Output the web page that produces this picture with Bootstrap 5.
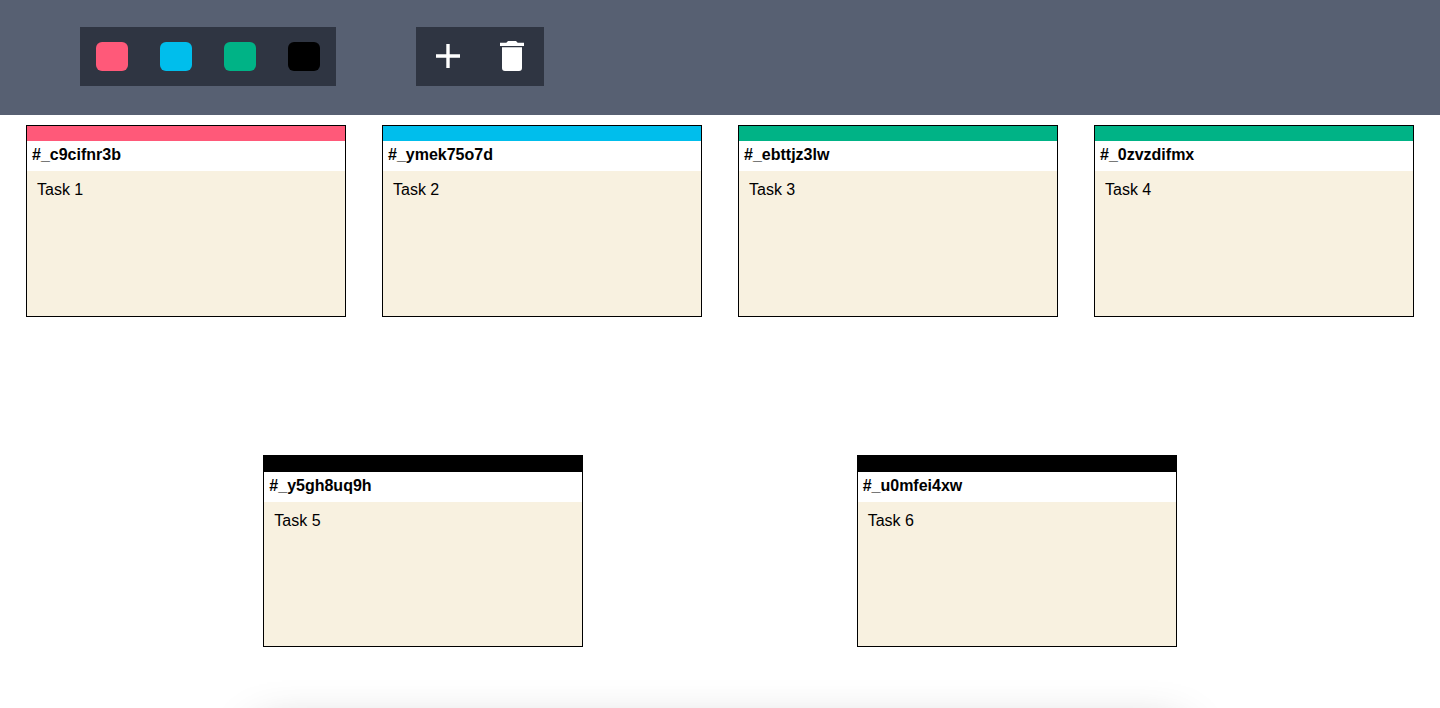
<!DOCTYPE html>
<html lang="en">
<head>
<meta charset="utf-8">
<meta name="viewport" content="width=device-width, initial-scale=1">
<title>Task board</title>
<link href="https://cdn.jsdelivr.net/npm/bootstrap@5.3.0/dist/css/bootstrap.min.css" rel="stylesheet">
<style>
  body { font-family: "Liberation Sans", Arial, sans-serif; font-size: 16px; line-height: 20px; color: #000; }
  .toolbar { background: #576072; padding: 27px 80px 29px; gap: 80px; }
  .tool-group { background: #2f3542; }
  .tool { width: 64px; height: 59px; border: 0; background: none; }
  .swatch { width: 32px; height: 29px; border-radius: 6px; }
  .pink { background: #ff5979; }
  .blue { background: #00beec; }
  .green { background: #00b386; }
  .black { background: #000; }
  .ticket { width: 320px; height: 192px; margin: 10px 10px 128px; border: 1px solid #000; }
  .ticket-color { height: 15px; }
  .ticket-color.black { height: 16px; }
  .ticket-id { height: 30px; padding: 4px 5px; font-size: 16px; line-height: 20px; }
  .ticket-text { background: #f8f1e0; padding: 9px 10px; }
  .sheet { top: 100%; left: 50%; width: 64%; height: 300px; margin-top: 24px; background: #fff; transform: translateX(-50%); box-shadow: 0 0 46px rgba(0, 0, 0, .3); }
</style>
</head>
<body>
<header class="toolbar d-flex flex-wrap">
  <div class="tool-group d-flex">
    <button type="button" class="tool p-0 d-flex align-items-center justify-content-center" aria-label="Pink"><span class="swatch pink"></span></button>
    <button type="button" class="tool p-0 d-flex align-items-center justify-content-center" aria-label="Blue"><span class="swatch blue"></span></button>
    <button type="button" class="tool p-0 d-flex align-items-center justify-content-center" aria-label="Green"><span class="swatch green"></span></button>
    <button type="button" class="tool p-0 d-flex align-items-center justify-content-center" aria-label="Black"><span class="swatch black"></span></button>
  </div>
  <div class="tool-group d-flex">
    <button type="button" class="tool p-0 d-flex align-items-center justify-content-center" aria-label="Add task">
      <svg width="32" height="32" viewBox="0 0 32 32" fill="#fff"><path d="M14.300 3h3.400v10.300H28v3.400H17.700V27h-3.400V16.700H4v-3.400h10.300z"/></svg>
    </button>
    <button type="button" class="tool p-0 d-flex align-items-center justify-content-center" aria-label="Delete task">
      <svg width="32" height="32" viewBox="0 0 32 32" fill="#fff"><path d="M4 5V1.700h6.300L12 0h8l1.700 1.700H28V5zM6 6.300h20V27q0 3-3 3H9q-3 0-3-3z"/></svg>
    </button>
  </div>
</header>
<main class="d-flex flex-wrap justify-content-evenly">
  <article class="ticket d-flex flex-column"><div class="ticket-color pink"></div><h2 class="ticket-id fw-bold m-0">#_c9cifnr3b</h2><div class="ticket-text flex-grow-1">Task 1</div></article>
  <article class="ticket d-flex flex-column"><div class="ticket-color blue"></div><h2 class="ticket-id fw-bold m-0">#_ymek75o7d</h2><div class="ticket-text flex-grow-1">Task 2</div></article>
  <article class="ticket d-flex flex-column"><div class="ticket-color green"></div><h2 class="ticket-id fw-bold m-0">#_ebttjz3lw</h2><div class="ticket-text flex-grow-1">Task 3</div></article>
  <article class="ticket d-flex flex-column"><div class="ticket-color green"></div><h2 class="ticket-id fw-bold m-0">#_0zvzdifmx</h2><div class="ticket-text flex-grow-1">Task 4</div></article>
  <article class="ticket mb-0 d-flex flex-column"><div class="ticket-color black"></div><h2 class="ticket-id fw-bold m-0">#_y5gh8uq9h</h2><div class="ticket-text flex-grow-1">Task 5</div></article>
  <article class="ticket mb-0 d-flex flex-column"><div class="ticket-color black"></div><h2 class="ticket-id fw-bold m-0">#_u0mfei4xw</h2><div class="ticket-text flex-grow-1">Task 6</div></article>
</main>
<div class="sheet position-fixed" aria-hidden="true"></div>
<script src="https://cdn.jsdelivr.net/npm/bootstrap@5.3.0/dist/js/bootstrap.bundle.min.js"></script>
</body>
</html>
